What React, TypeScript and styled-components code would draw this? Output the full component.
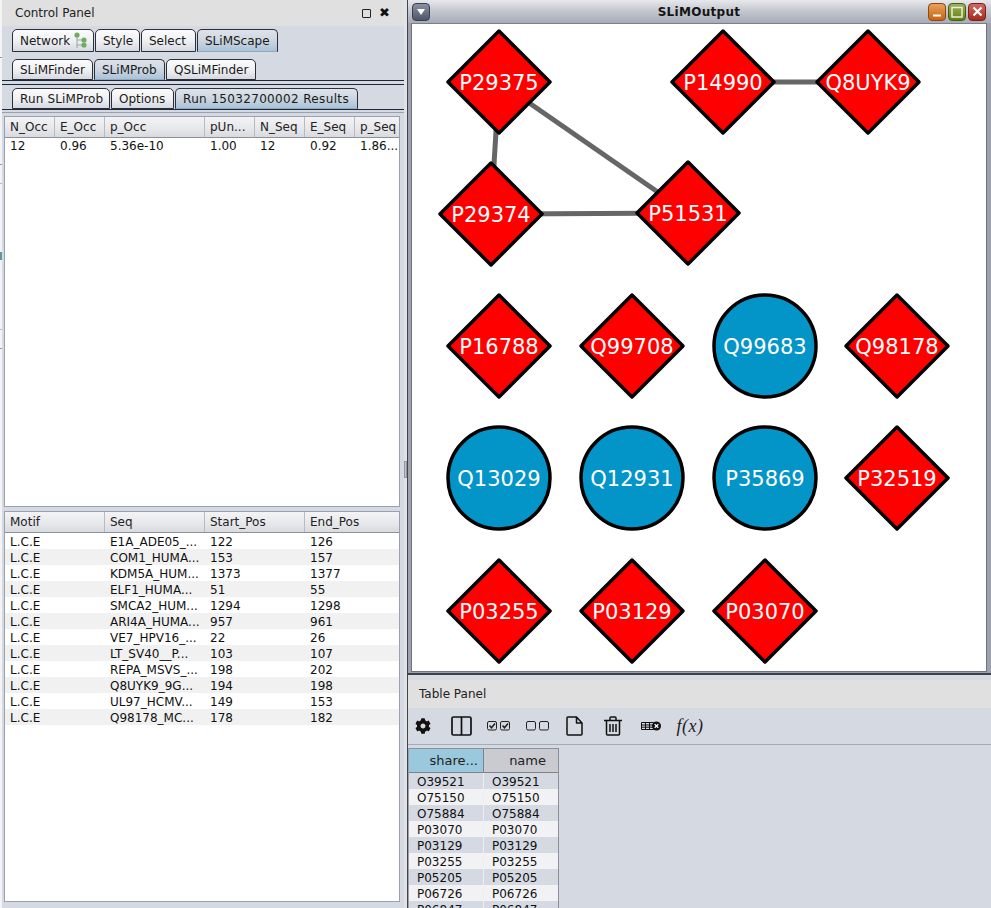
import React from "react";
import styled, { createGlobalStyle } from "styled-components";
import { FaCog } from "react-icons/fa";

const Global = createGlobalStyle`
  html, body { margin: 0; padding: 0; background: #d5d9e2; overflow: hidden; }
  #root { width: 991px; height: 908px; }
  * { box-sizing: border-box; }
`;
const Shell = styled.div`
  width: 991px; height: 908px; display: flex; overflow: hidden;
  background: #d5d9e2; color: #111;
  font-family: "DejaVu Sans", sans-serif; font-size: 12px;
`;
const Sliver = styled.div`
  width: 2px; flex: none; background:
    linear-gradient(#999,#999) 0 57px / 2px 1px no-repeat,
    linear-gradient(#999,#999) 0 164px / 2px 1px no-repeat,
    linear-gradient(#bbb,#bbb) 0 183px / 2px 1px no-repeat,
    linear-gradient(#5a9a9a,#5a9a9a) 0 252px / 2px 8px no-repeat,
    linear-gradient(#bbb,#bbb) 0 329px / 2px 1px no-repeat,
    linear-gradient(#999,#999) 0 348px / 2px 1px no-repeat,
    #f4f4f6;
`;
const LeftPanel = styled.div`
  width: 402px; flex: none; height: 908px; display: flex; flex-direction: column;
`;
const TitleBar = styled.div`
  height: ${p => p.$h}px; flex: none; background: #e0e0e0; display: flex; align-items: center;
  padding-left: ${p => p.$pad}px; padding-right: 14px; justify-content: space-between;
`;
const TitleText = styled.span` font-size: 12px; color: #222; `;
const TitleIcons = styled.div` display: flex; align-items: center; gap: 8px; `;
const FloatBox = styled.span` width: 9px; height: 9px; border: 1px solid #222; border-radius: 1px; display: block; `;
const CloseX = styled.span` font-size: 13px; font-weight: 700; line-height: 12px; color: #111; `;
const TabRow = styled.div`
  display: flex; height: ${p => p.$h}px; margin-top: ${p => p.$top}px; padding-left: 10px; gap: 1px; flex: none;
`;
const Tab = styled.div`
  width: ${p => p.$w}px; height: 100%;
  border: 1px solid #2b2f3a; border-bottom: ${p => (p.$active ? "1px solid #8ea9c0" : "1px solid #2b2f3a")};
  border-radius: 5px 5px 0 0; padding: 0 0 0 7px;
  display: flex; align-items: center; gap: 4px; white-space: nowrap; font-size: 12px; color: #1a1a1a;
  letter-spacing: ${p => p.$ls || 0}px;
  background: ${p => p.$active
    ? "linear-gradient(#dfe3ea 0%, #cdd6e0 50%, #a9c3d8 100%)"
    : "linear-gradient(#fbfbfc 0%, #eeeff2 55%, #d5d8df 100%)"};
`;
const Rule = styled.div` height: 1px; flex: none; background: ${p => p.$c}; margin-top: ${p => p.$top}px; `;
const TableBox = styled.div`
  margin-left: 2px; width: 396px; height: ${p => p.$h}px; margin-top: ${p => p.$top}px; flex: none;
  background: #fff; border: 1px solid #9aa0ae; overflow: hidden;
`;
const HeadRow = styled.div`
  display: grid; grid-template-columns: ${p => p.$cols}; height: ${p => p.$h}px;
  background: linear-gradient(#f4f4f6, #e6e7ea 60%, #d8dade);
  border-bottom: 1px solid #8c919c;
`;
const HeadCell = styled.div`
  border-right: 1px solid #b6bac3; padding-left: 5px; display: flex; align-items: center;
  white-space: nowrap; overflow: hidden; font-size: 12px; color: #222;
  &:last-child { border-right: 0; }
`;
const BodyRow = styled.div`
  display: grid; grid-template-columns: ${p => p.$cols}; height: 16px; align-items: start; overflow: hidden;
  background: ${p => (p.$alt ? "#f1f1f2" : "#fff")};
`;
const BodyCell = styled.div`
  padding-left: 5px; height: 16px; white-space: nowrap; overflow: hidden; font-size: 12px;
  line-height: ${p => p.$line}px; color: #111;
`;
const Gutter = styled.div`
  width: 3px; flex: none; height: 908px; display: flex; align-items: center;
  background: #dfe2e8;
`;
const Grip = styled.div` width: 3px; height: 17px; margin-top: 30px; background: #bcc1cb; border: 1px solid #9297a3; `;
const RightPanel = styled.div` flex: 1; display: flex; flex-direction: column; min-width: 0; border-left: 1px solid #444; `;
const Window = styled.div`
  height: 675px; flex: none; background: #9da1ab; display: flex; flex-direction: column; border-bottom: 2px solid #3c3f47;
`;
const WinBar = styled.div`
  height: 23px; flex: none; display: grid; grid-template-columns: 1fr auto 1fr; align-items: center; padding: 0 5px 0 4px;
  background: linear-gradient(#e6e8ec, #c6c9d0 45%, #a7abb6);
`;
const MenuBtn = styled.div`
  width: 18px; height: 18px; border-radius: 4px; display: flex; align-items: center; justify-content: center;
  background: linear-gradient(#8a91a2, #4f5669); border: 1px solid #3a3f4d; justify-self: start;
`;
const WinTitle = styled.span` font-weight: 700; font-size: 12px; color: #151515; letter-spacing: 0.3px; `;
const WinBtns = styled.div` display: flex; gap: 2px; justify-self: end; `;
const WinBtn = styled.div`
  width: 18px; height: 18px; border-radius: 4px; display: flex; align-items: center; justify-content: center;
  background: ${p => p.$bg}; border: 1px solid ${p => p.$edge};
`;
const Canvas = styled.div`
  width: 576px; height: 649px; margin-left: 3px; background: #fff; border: 1px solid #6d7280; border-top-color: #7a7f8c; overflow: hidden; flex: none;
`;
const CanvasSvg = styled.svg` display: block; `;
const PanelGap = styled.div` height: 5px; flex: none; background: #d5d9e2; `;
const Toolbar = styled.div`
  height: 37px; flex: none; display: flex; align-items: center; color: #111; border-bottom: 1px solid #a6aab4;
`;
const Slot = styled.div`
  margin-left: ${p => p.$left}px; width: ${p => p.$w}px; display: flex; align-items: center; justify-content: center; flex: none;
`;
const Formula = styled.span`
  font-family: "Liberation Serif", serif; font-style: italic; font-size: 18px; color: #222; letter-spacing: 0.5px; white-space: nowrap;
`;
const Attr = styled.div` width: 151px; margin-top: 3px; flex: none; border-left: 1px solid #9aa0ae; border-right: 1px solid #8a8f9a; `;
const AttrHead = styled.div`
  display: grid; grid-template-columns: 75px 74px; height: 25px; border-top: 1px solid #8a8f9a; border-bottom: 1px solid #7d828d;
`;
const AttrHeadCell = styled.div`
  background: ${p => (p.$sel ? "#9ac8dc" : "#c9cbd1")};
  border-right: ${p => (p.$sel ? "1px solid #7d828d" : "0")};
  display: flex; align-items: center; justify-content: flex-end; padding-right: ${p => p.$pr}px; font-size: 13px; color: #222;
`;
const AttrRow = styled.div`
  display: grid; grid-template-columns: 75px 74px; height: 16px; overflow: hidden; background: ${p => (p.$alt ? "#f2f2f4" : "#d5d9e2")};
`;
const AttrCell = styled.div`
  padding-left: 8px; height: 16px; font-size: 12px; line-height: 18px; color: #111; border-right: 1px solid #eceef2;
  &:last-child { border-right: 0; }
`;

const cols1 = "50px 50px 100px 50px 50px 50px 1fr";
const cols2 = "100px 100px 100px 1fr";
const heads1 = ["N_Occ", "E_Occ", "p_Occ", "pUn...", "N_Seq", "E_Seq", "p_Seq"];
const row1 = ["12", "0.96", "5.36e-10", "1.00", "12", "0.92", "1.86..."];
const heads2 = ["Motif", "Seq", "Start_Pos", "End_Pos"];
const rows2 = [
  ["E1A_ADE05_...", "122", "126"], ["COM1_HUMA...", "153", "157"], ["KDM5A_HUM...", "1373", "1377"],
  ["ELF1_HUMA...", "51", "55"], ["SMCA2_HUM...", "1294", "1298"], ["ARI4A_HUMA...", "957", "961"],
  ["VE7_HPV16_...", "22", "26"], ["LT_SV40__P...", "103", "107"], ["REPA_MSVS_...", "198", "202"],
  ["Q8UYK9_9G...", "194", "198"], ["UL97_HCMV...", "149", "153"], ["Q98178_MC...", "178", "182"],
];
const attrs = ["O39521", "O75150", "O75884", "P03070", "P03129", "P03255", "P05205", "P06726", "P06847"];

type Node = { id: string; x: number; y: number; circle?: boolean };
const OX = 412, OY = 24;
const nodes: Node[] = [
  { id: "P29375", x: 499, y: 82 }, { id: "P14990", x: 723, y: 82 }, { id: "Q8UYK9", x: 868, y: 82 },
  { id: "P29374", x: 491, y: 214 }, { id: "P51531", x: 688, y: 213 },
  { id: "P16788", x: 499, y: 346 }, { id: "Q99708", x: 632, y: 346 }, { id: "Q99683", x: 765, y: 346, circle: true }, { id: "Q98178", x: 897, y: 346 },
  { id: "Q13029", x: 499, y: 478, circle: true }, { id: "Q12931", x: 632, y: 478, circle: true }, { id: "P35869", x: 765, y: 478, circle: true }, { id: "P32519", x: 897, y: 478 },
  { id: "P03255", x: 499, y: 611 }, { id: "P03129", x: 632, y: 611 }, { id: "P03070", x: 765, y: 611 },
];
const edges: [number, number][] = [[0, 3], [0, 4], [3, 4], [1, 2]];

const NetworkIcon = () => (
  <svg width="14" height="18" viewBox="0 0 14 18">
    <path d="M3 3V16M3 8H9M3 13H9" stroke="#9aa5a5" strokeWidth="1" fill="none" />
    <circle cx="3" cy="3" r="2.6" fill="#6fae5f" />
    <circle cx="10" cy="8" r="2.6" fill="#6fae5f" />
    <circle cx="10" cy="13" r="2.6" fill="#6fae5f" />
  </svg>
);

const Graph = () => (
  <CanvasSvg width="574" height="647" viewBox={`${OX} ${OY} 574 647`}>
    {edges.map(([a, b], i) => (
      <line key={i} x1={nodes[a].x} y1={nodes[a].y} x2={nodes[b].x} y2={nodes[b].y} stroke="#666" strokeWidth="5" />
    ))}
    {nodes.map(n => (
      <g key={n.id}>
        {n.circle ? (
          <circle cx={n.x} cy={n.y} r="51" fill="#0394c8" stroke="#000" strokeWidth="3.5" />
        ) : (
          <polygon
            points={`${n.x},${n.y - 51} ${n.x + 51},${n.y} ${n.x},${n.y + 51} ${n.x - 51},${n.y}`}
            fill="#ff0000" stroke="#000" strokeWidth="3.5" strokeLinejoin="round"
          />
        )}
        <text x={n.x} y={n.y + 8} textAnchor="middle" fill="#fff" fontFamily="'DejaVu Sans', sans-serif" fontSize="21">{n.id}</text>
      </g>
    ))}
  </CanvasSvg>
);

const ColumnsIcon = () => (
  <svg width="21" height="20" viewBox="0 0 21 20" fill="none" stroke="#111" strokeWidth="1.7">
    <rect x="1" y="1" width="19" height="18" rx="1.5" /><path d="M10.5 1V19" />
  </svg>
);
const ChecksIcon = () => (
  <svg width="23" height="10" viewBox="0 0 23 10" fill="none" stroke="#222" strokeWidth="1">
    <rect x=".5" y=".5" width="9" height="8.5" rx="1.5" /><rect x="13.5" y=".5" width="9" height="8.5" rx="1.5" />
    <path d="M2.5 4.5L4.5 6.8L8 2.5M15.5 4.5L17.5 6.8L21 2.5" strokeWidth="1.5" />
  </svg>
);
const EmptiesIcon = () => (
  <svg width="23" height="10" viewBox="0 0 23 10" fill="none" stroke="#222" strokeWidth="1">
    <rect x=".5" y=".5" width="9" height="8.5" rx="1.5" /><rect x="13.5" y=".5" width="9" height="8.5" rx="1.5" />
  </svg>
);
const FileIcon = () => (
  <svg width="17" height="20" viewBox="0 0 17 20" fill="none" stroke="#111" strokeWidth="1.5">
    <path d="M1 2a1 1 0 0 1 1-1h8.5L16 7v11a1 1 0 0 1-1 1H2a1 1 0 0 1-1-1zM10.5 1V7H16" strokeLinejoin="round" />
  </svg>
);
const TrashIcon = () => (
  <svg width="18" height="20" viewBox="0 0 18 20" fill="none" stroke="#111" strokeWidth="1.5">
    <path d="M0 4.5H18M6 4V2a1 1 0 0 1 1-1h4a1 1 0 0 1 1 1V4M2.5 4.5V18a1 1 0 0 0 1 1h11a1 1 0 0 0 1-1V4.5" />
    <path d="M6 8V16M9 8V16M12 8V16" />
  </svg>
);
const TableXIcon = () => (
  <svg width="20" height="10" viewBox="0 0 20 10">
    <g fill="none" stroke="#111" strokeWidth="1">
      <path d="M.5 1.5H12.5V8.5H.5ZM.5 4H12.5M.5 6.2H12.5M4.5 1.5V8.5M8.5 1.5V8.5" />
    </g>
    <circle cx="15.5" cy="5" r="4.5" fill="#111" />
    <path d="M13.7 3.2L17.3 6.8M17.3 3.2L13.7 6.8" stroke="#fff" strokeWidth="1.3" />
  </svg>
);

export default function App() {
  return (
    <Shell>
      <Global />
      <Sliver />
      <LeftPanel>
        <TitleBar $h={26} $pad={13}>
          <TitleText>Control Panel</TitleText>
          <TitleIcons><FloatBox /><CloseX>✖</CloseX></TitleIcons>
        </TitleBar>
        <TabRow $h={23} $top={3}>
          <Tab $w={82}>Network <NetworkIcon /></Tab>
          <Tab $w={45}>Style</Tab>
          <Tab $w={55}>Select</Tab>
          <Tab $w={81} $active>SLiMScape</Tab>
        </TabRow>
        <TabRow $h={21} $top={7}>
          <Tab $w={81}>SLiMFinder</Tab>
          <Tab $w={71} $active>SLiMProb</Tab>
          <Tab $w={90}>QSLiMFinder</Tab>
        </TabRow>
        <Rule $c="#20263a" $top={0} />
        <Rule $c="#20263a" $top={3} />
        <TabRow $h={21} $top={3}>
          <Tab $w={98} $ls={0.15}>Run SLiMProb</Tab>
          <Tab $w={63}>Options</Tab>
          <Tab $w={183} $active $ls={0.35}>Run 15032700002 Results</Tab>
        </TabRow>
        <Rule $c="#20263a" $top={0} />
        <Rule $c="#9aa0ae" $top={2} />
        <TableBox $h={391} $top={3}>
          <HeadRow $cols={cols1} $h={21}>{heads1.map(h => <HeadCell key={h}>{h}</HeadCell>)}</HeadRow>
          <BodyRow $cols={cols1}>{row1.map((c, i) => <BodyCell key={i} $line={16}>{c}</BodyCell>)}</BodyRow>
        </TableBox>
        <TableBox $h={391} $top={4}>
          <HeadRow $cols={cols2} $h={21}>{heads2.map(h => <HeadCell key={h}>{h}</HeadCell>)}</HeadRow>
          {rows2.map((r, i) => (
            <BodyRow key={i} $cols={cols2} $alt={i % 2 === 1}>
              <BodyCell $line={18}>L.C.E</BodyCell>
              {r.map((c, j) => <BodyCell key={j} $line={18}>{c}</BodyCell>)}
            </BodyRow>
          ))}
        </TableBox>
      </LeftPanel>
      <Gutter><Grip /></Gutter>
      <RightPanel>
        <Window>
          <WinBar>
            <MenuBtn>
              <svg width="8" height="6" viewBox="0 0 8 6"><path d="M0 0H8L4 6Z" fill="#fff" /></svg>
            </MenuBtn>
            <WinTitle>SLiMOutput</WinTitle>
            <WinBtns>
              <WinBtn $bg="linear-gradient(#e8a15c,#c8650f)" $edge="#8a4a10">
                <svg width="10" height="10" viewBox="0 0 10 10"><path d="M1 8.5H9" stroke="#fff" strokeWidth="2" /></svg>
              </WinBtn>
              <WinBtn $bg="linear-gradient(#a0b060,#64800f)" $edge="#4a5c12">
                <svg width="12" height="12" viewBox="0 0 12 12"><path d="M1 1.5H11V11H1Z" fill="none" stroke="#e8eed8" strokeWidth="1.5" /></svg>
              </WinBtn>
              <WinBtn $bg="linear-gradient(#d06a60,#a82a20)" $edge="#7a2018">
                <svg width="11" height="11" viewBox="0 0 11 11"><path d="M1.5 1.5L9.5 9.5M9.5 1.5L1.5 9.5" stroke="#fff" strokeWidth="2.2" /></svg>
              </WinBtn>
            </WinBtns>
          </WinBar>
          <Canvas><Graph /></Canvas>
        </Window>
        <PanelGap />
        <TitleBar $h={28} $pad={11}><TitleText>Table Panel</TitleText></TitleBar>
        <Toolbar>
          <Slot $left={6} $w={18}><FaCog size={16} /></Slot>
          <Slot $left={19} $w={21}><ColumnsIcon /></Slot>
          <Slot $left={15} $w={23}><ChecksIcon /></Slot>
          <Slot $left={16} $w={23}><EmptiesIcon /></Slot>
          <Slot $left={17} $w={17}><FileIcon /></Slot>
          <Slot $left={21} $w={18}><TrashIcon /></Slot>
          <Slot $left={19} $w={20}><TableXIcon /></Slot>
          <Slot $left={14} $w={30}><Formula>f(x)</Formula></Slot>
        </Toolbar>
        <Attr>
          <AttrHead>
            <AttrHeadCell $sel $pr={5}>share...</AttrHeadCell>
            <AttrHeadCell $pr={12}>name</AttrHeadCell>
          </AttrHead>
          {attrs.map((a, i) => (
            <AttrRow key={a} $alt={i % 2 === 1}><AttrCell>{a}</AttrCell><AttrCell>{a}</AttrCell></AttrRow>
          ))}
        </Attr>
      </RightPanel>
    </Shell>
  );
}
